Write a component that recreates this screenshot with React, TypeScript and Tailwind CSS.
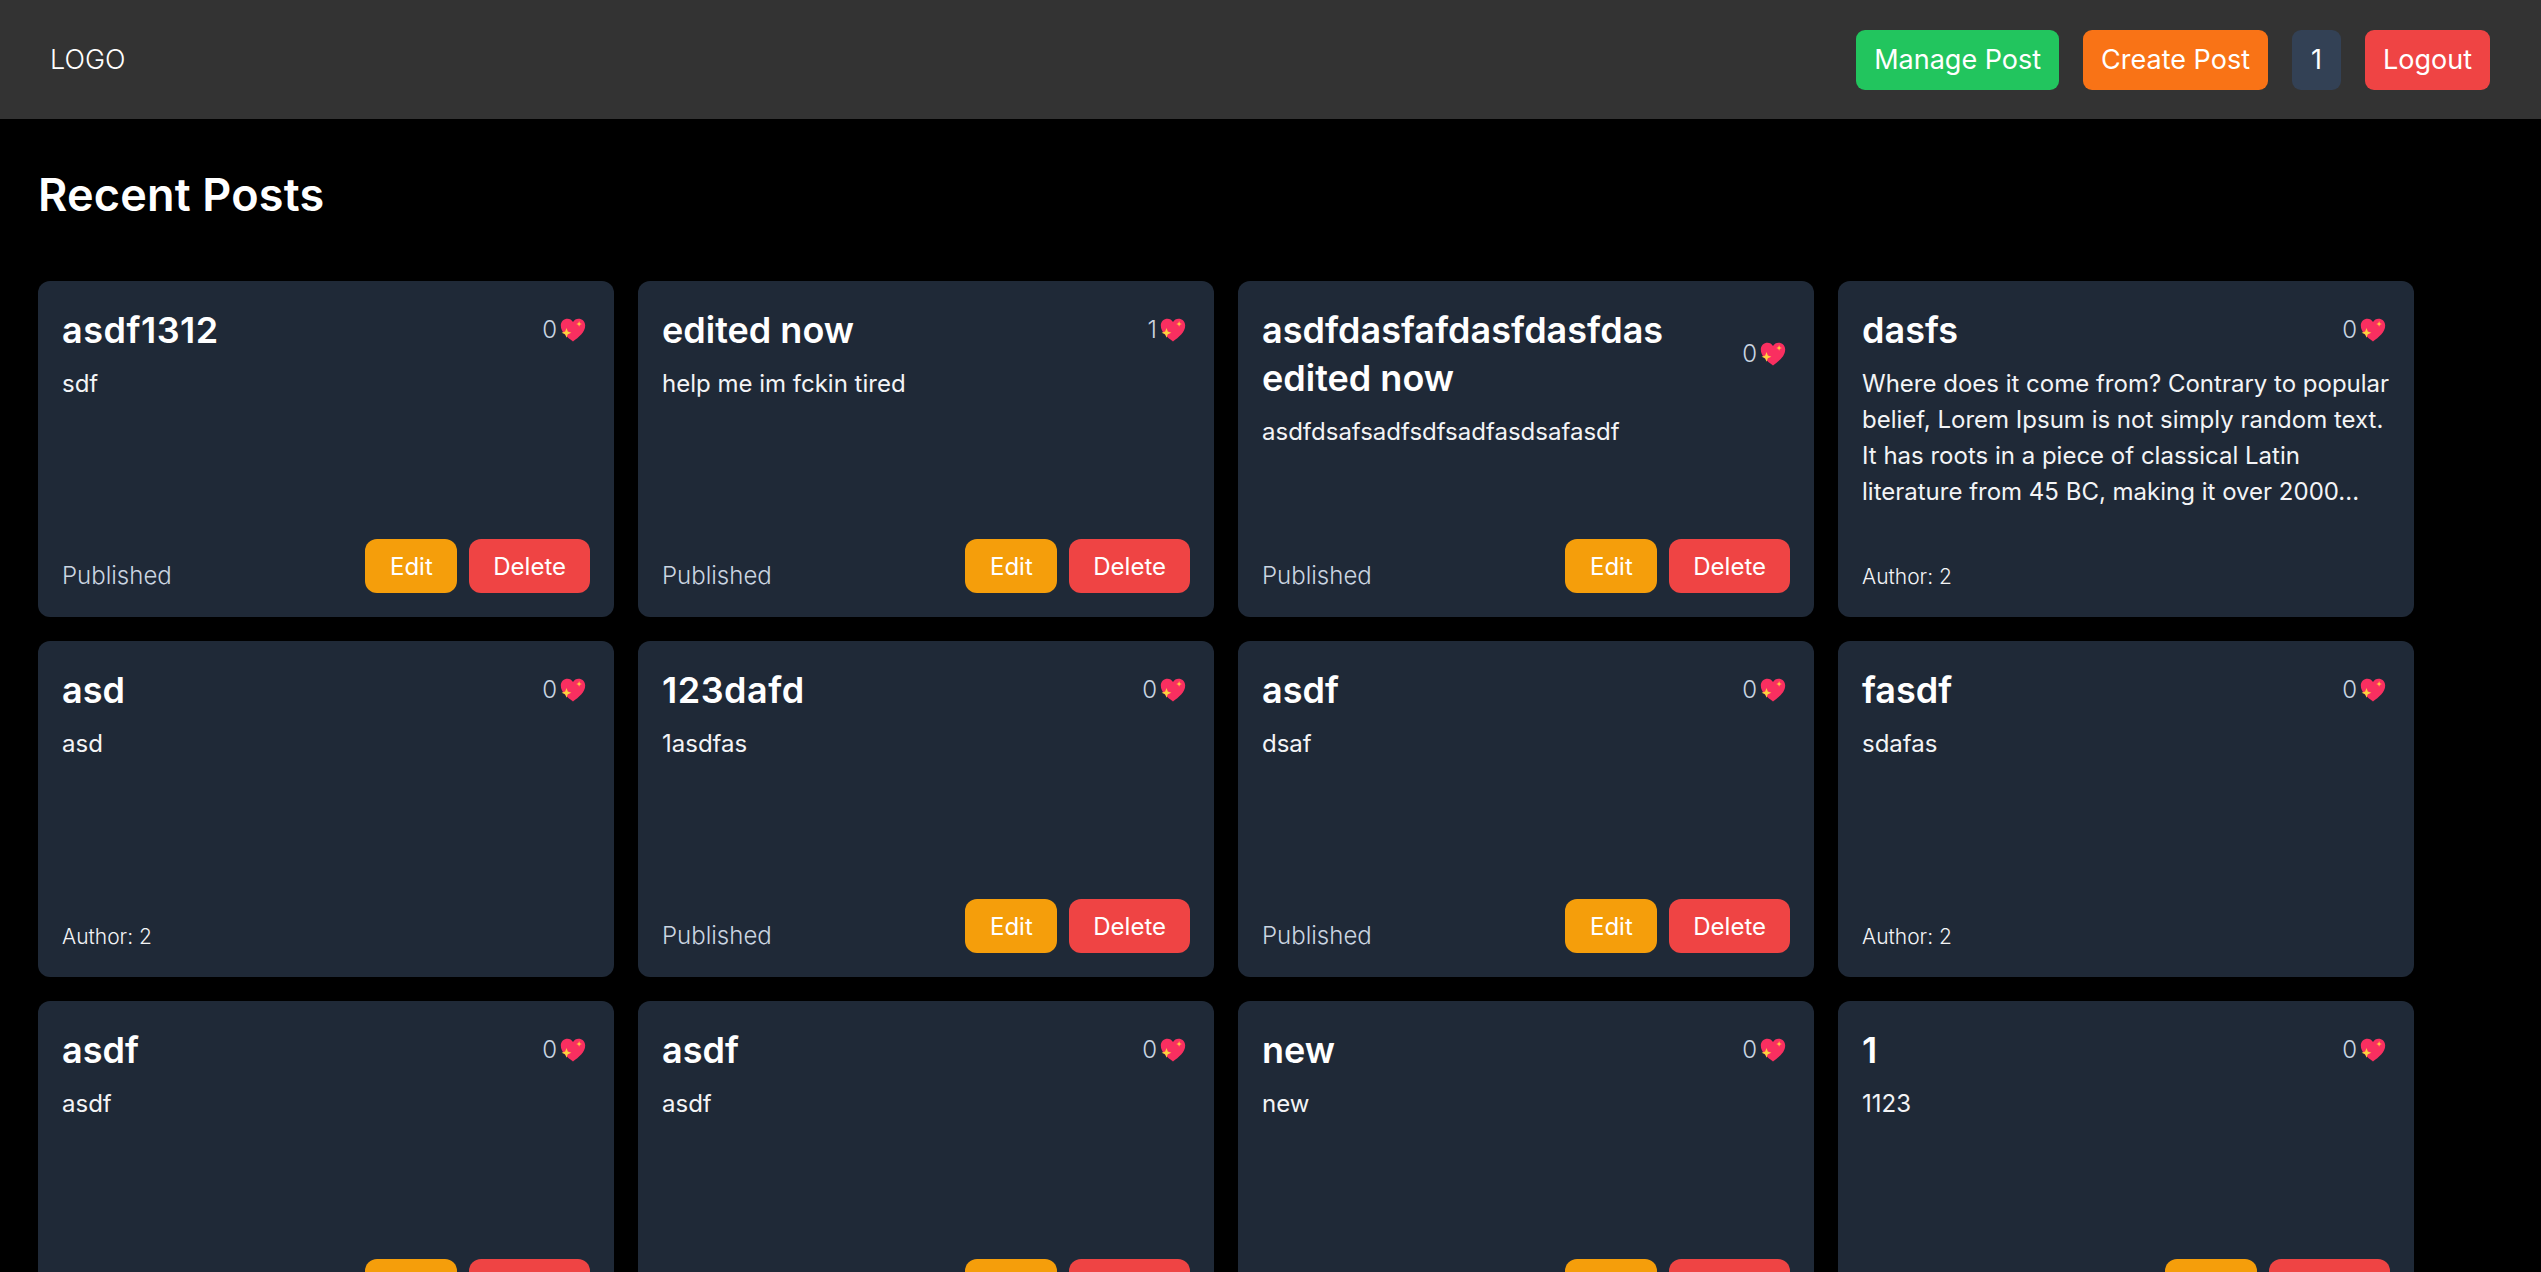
import React from "react";

function Heart() {
  return (
    <svg viewBox="0 0 32 32" className="w-[26px] h-[26px] shrink-0">
      <path d="M16 30 C9 25 1 19 1 10.5 C1 5 5 2 9.2 2 C12 2 14.6 3.5 16 6 C17.4 3.5 20 2 22.8 2 C27 2 31 5 31 10.5 C31 19 23 25 16 30Z" fill="#f92f60" />
      <path d="M8 13.5 L9.6 17.9 L14 19.5 L9.6 21.1 L8 25.5 L6.4 21.1 L2 19.5 L6.4 17.9Z" fill="#ffd23f" />
      <path d="M23.5 5 L24.4 7.6 L27 8.5 L24.4 9.4 L23.5 12 L22.6 9.4 L20 8.5 L22.6 7.6Z" fill="#ffd23f" />
    </svg>
  );
}

type Post = { title: string; body: string; likes: number; mine: boolean; digits?: boolean };

const posts: Post[] = [
  { title: "asdf1312", body: "sdf", likes: 0, mine: true, digits: true },
  { title: "edited now", body: "help me im fckin tired", likes: 1, mine: true },
  { title: "asdfdasfafdasfdasfdas edited now", body: "asdfdsafsadfsdfsadfasdsafasdf", likes: 0, mine: true },
  {
    title: "dasfs",
    body: "Where does it come from? Contrary to popular belief, Lorem Ipsum is not simply random text. It has roots in a piece of classical Latin literature from 45 BC, making it over 2000...",
    likes: 0,
    mine: false,
  },
  { title: "asd", body: "asd", likes: 0, mine: false },
  { title: "123dafd", body: "1asdfas", likes: 0, mine: true, digits: true },
  { title: "asdf", body: "dsaf", likes: 0, mine: true },
  { title: "fasdf", body: "sdafas", likes: 0, mine: false },
  { title: "asdf", body: "asdf", likes: 0, mine: true },
  { title: "asdf", body: "asdf", likes: 0, mine: true },
  { title: "new", body: "new", likes: 0, mine: true },
  { title: "1", body: "1123", likes: 0, mine: true },
];

function Card({ post }: { post: Post }) {
  return (
    <div className="bg-[#1f2937] rounded-[12px] px-[24px] pt-[25px] pb-[24px] h-[336px] flex flex-col justify-between">
      <div>
        <div className="flex items-center justify-between">
          <h2 className={post.digits ? "text-[36px] leading-[48px] font-semibold text-white tracking-[0.5px]" : "text-[36px] leading-[48px] font-semibold text-white"}>{post.title}</h2>
          <div className="flex items-center gap-[3px] shrink-0 ml-[12px] text-[24px] leading-[36px] text-[#cbd5e1] font-light pr-[4px]">
            <span>{post.likes}</span>
            <Heart />
          </div>
        </div>
        <p className="mt-[12px] text-[24px] leading-[36px] text-[#f3f4f6] font-normal">{post.body}</p>
      </div>
      {post.mine ? (
        <div className="flex items-end justify-between">
          <span className="text-[24px] leading-[36px] text-[#cbd5e1] font-light translate-y-[1px]">Published</span>
          <div className="flex gap-[12px]">
            <button className="bg-[#f59e0b] text-white text-[24px] leading-[32px] pt-[12px] pb-[10px] px-[24.5px] rounded-[12px]">Edit</button>
            <button className="bg-[#ef4444] text-white text-[24px] leading-[32px] pt-[12px] pb-[10px] px-[24px] rounded-[12px]">Delete</button>
          </div>
        </div>
      ) : (
        <span className="text-[21px] leading-[30px] text-[#f3f4f6] font-light -translate-y-[1px]">Author: 2</span>
      )}
    </div>
  );
}

export default function App() {
  return (
    <div className="h-screen overflow-hidden bg-black text-white font-['Inter',sans-serif]">
      <header className="h-[119px] bg-[#333333] flex items-center justify-between pl-[50px] pr-[51px]">
        <span className="text-[27px] leading-[42px] font-light pt-[1px]">LOGO</span>
        <nav className="flex items-center gap-[24px]">
          <button className="bg-[#22c55e] text-[27px] leading-[42px] px-[18px] py-[9px] rounded-[9px]">Manage Post</button>
          <button className="bg-[#f97316] text-[27px] leading-[42px] px-[18px] py-[9px] rounded-[9px]">Create Post</button>
          <button className="bg-[#334155] text-[27px] leading-[42px] px-[19px] py-[9px] rounded-[9px]">1</button>
          <button className="bg-[#ef4444] text-[27px] leading-[42px] px-[18px] py-[9px] rounded-[9px]">Logout</button>
        </nav>
      </header>
      <main className="pl-[38px] pt-[46px]">
        <h1 className="text-[45px] leading-[60px] font-semibold tracking-[0.2px]">Recent Posts</h1>
        <div className="mt-[56px] grid grid-cols-[repeat(4,576px)] gap-[24px]">
          {posts.map((p, i) => (
            <Card key={i} post={p} />
          ))}
        </div>
      </main>
    </div>
  );
}
